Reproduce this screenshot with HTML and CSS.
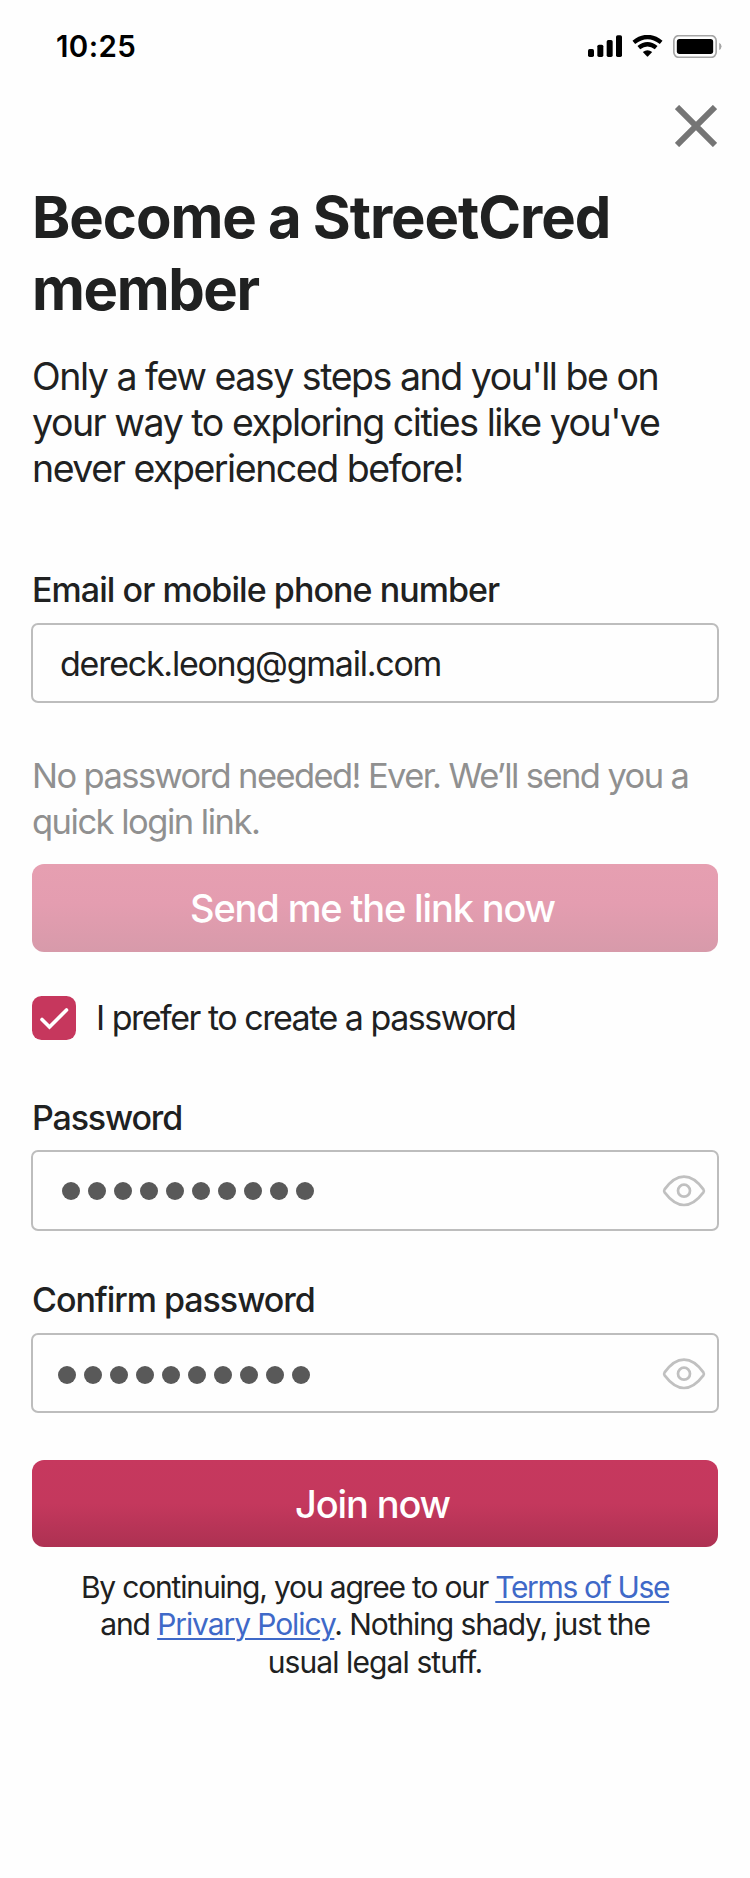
FILE: index.html
```html
<!DOCTYPE html>
<html lang="en">
<head>
<meta charset="utf-8">
<title>Become a StreetCred member</title>
<link rel="stylesheet" href="styles.css">
</head>
<body>
<div class="status">
  <span class="time">10:25</span>
  <div class="status-icons">
    <svg class="signal" viewBox="0 0 102 66"><rect x="0" y="42" width="18" height="24" rx="5"/><rect x="28" y="29" width="18" height="37" rx="5"/><rect x="56" y="15" width="18" height="51" rx="5"/><rect x="84" y="1" width="18" height="65" rx="5"/></svg>
    <svg class="wifi" viewBox="0 0 92 66"><path d="M5 22Q46 -10 87 22M20 38Q46 17 72 38" fill="none" stroke="#000" stroke-width="13" stroke-linecap="butt"/><path d="M32 51Q46 41 60 51L48 64Q46 66 44 64Z"/></svg>
    <svg class="battery" viewBox="0 0 146 69"><rect x="2" y="2" width="127" height="65" rx="15" fill="none" stroke="#a5a5a5" stroke-width="5"/><rect x="11" y="12" width="109" height="45" rx="8"/><path d="M138 23Q145 26 145 34T138 45Z" fill="#a5a5a5"/></svg>
  </div>
</div>
<button class="close" aria-label="Close"><svg viewBox="0 0 42 42"><path d="M2 2 40 40M40 2 2 40" stroke="#757575" stroke-width="6"/></svg></button>
<main class="content">
  <h1 class="title"><span class="line t1">Become a StreetCred</span><span class="line t2">member</span></h1>
  <p class="intro"><span class="line i1">Only a few easy steps and you'll be on</span><span class="line i2">your way to exploring cities like you've</span><span class="line i3">never experienced before!</span></p>
  <div class="label email-label">Email or mobile phone number</div>
  <div class="field"><span class="value">dereck.leong@gmail.com</span></div>
  <p class="hint"><span class="line h1">No password needed! Ever. We’ll send you a</span><span class="line h2">quick login link.</span></p>
  <button class="button send"><span>Send me the link now</span></button>
  <div class="check-row">
    <svg class="checkbox" viewBox="0 0 44 44"><rect width="44" height="44" rx="9.5" fill="#c6375d"/><path d="M10 23.5 17.5 31 34.500 14" fill="none" stroke="#fff" stroke-width="3.6" stroke-linecap="round"/></svg>
    <span class="check-text">I prefer to create a password</span>
  </div>
  <div class="label pass-label">Password</div>
  <div class="field pass">
    <div class="dots"><i></i><i></i><i></i><i></i><i></i><i></i><i></i><i></i><i></i><i></i></div>
    <svg class="eye" viewBox="0 0 42 32"><path d="M1.6 14.4C7 6.800 13.500 1.600 21 1.600S35 6.800 40.400 14.400Q41.400 16 40.400 17.400C35 24.600 28.500 30 21 30S7 24.600 1.600 17.400Q.6 16 1.600 14.400Z"/><circle cx="21" cy="15.700" r="6"/></svg>
  </div>
  <div class="label confirm-label">Confirm password</div>
  <div class="field confirm">
    <div class="dots"><i></i><i></i><i></i><i></i><i></i><i></i><i></i><i></i><i></i><i></i></div>
    <svg class="eye" viewBox="0 0 42 32"><path d="M1.6 14.4C7 6.800 13.500 1.600 21 1.600S35 6.800 40.400 14.400Q41.400 16 40.400 17.400C35 24.600 28.500 30 21 30S7 24.600 1.600 17.400Q.6 16 1.600 14.400Z"/><circle cx="21" cy="15.700" r="6"/></svg>
  </div>
  <button class="button join"><span>Join now</span></button>
  <p class="terms"><span class="line l1">By continuing, you agree to our <a href="#">Terms of Use</a></span><span class="line l2">and <a href="#">Privary Policy</a>. Nothing shady, just the</span><span class="line l3">usual legal stuff.</span></p>
</main>
</body>
</html>
```
FILE: styles.css
```css
* { box-sizing: border-box; margin: 0; padding: 0; }
body {
  width: 750px;
  min-height: 1878px;
  background: #fefefe;
  color: #202121;
  font-family: Inter, "Liberation Sans", sans-serif;
  overflow-x: hidden;
}
button { border: 0; background: none; font: inherit; }
svg { display: block; flex: none; }
.line { display: block; white-space: nowrap; }

.status {
  height: 90px;
  padding: 0 28px 0 56px;
  display: flex;
  justify-content: space-between;
  align-items: center;
}
.time { color: #000; font-size: 29.5px; font-weight: 600; letter-spacing: 0.4px; padding-top: 2px; }
.status-icons { display: flex; align-items: center; gap: 10px; padding-top: 2px; }
.signal { width: 34px; height: 22px; }
.wifi { width: 31px; height: 22px; }
.battery { width: 49px; height: 23px; }

.close { display: block; margin: 15px 33px 0 auto; width: 42px; height: 42px; }
.close svg { width: 42px; height: 42px; }

.content { padding: 0 32px; margin-top: 34px; display: flex; flex-direction: column; }
.title { font-size: 58px; font-weight: 700; line-height: 72px; }
.t1 { letter-spacing: -1.05px; word-spacing: -0.5px; }
.t2 { letter-spacing: -1.4px; }
.intro { margin-top: 29px; font-size: 37.5px; line-height: 46px; letter-spacing: -1.46px; }
.label { font-size: 34px; font-weight: 500; line-height: 40px; letter-spacing: -0.94px; white-space: nowrap; }
.email-label { margin-top: 78px; }
.field {
  height: 80px;
  margin: 13px -1px 0;
  padding: 0 12px 0 27px;
  border: 2px solid #bdbdbd;
  border-radius: 7px;
  display: flex;
  align-items: center;
  justify-content: space-between;
}
.value { font-size: 34px; letter-spacing: -1.24px; }
.hint { margin-top: 50px; font-size: 34.5px; line-height: 46px; letter-spacing: -1.59px; color: #909090; }
.h2 { letter-spacing: -1.5px; }
.button {
  border-radius: 12px;
  color: #fff;
  font-size: 38px;
  font-weight: 500;
  line-height: 86px;
  white-space: nowrap;
  text-align: center;
  letter-spacing: -1.15px;
  padding-right: 5px;
}
.send { margin-top: 19px; height: 88px; background: linear-gradient(#e69fb1 0%, #e49db0 45%, #d79aaa 100%); }
.check-row { margin-top: 44px; display: flex; gap: 20px; height: 44px; }
.checkbox { width: 44px; height: 44px; }
.check-text { font-size: 34px; line-height: 43px; letter-spacing: -1.49px; white-space: nowrap; }
.pass-label { margin-top: 58px; letter-spacing: -1.15px; }
.pass { margin-top: 12px; height: 81px; padding-left: 29px; }
.dots { display: flex; gap: 8px; }
.dots i { width: 18px; height: 18px; border-radius: 50%; background: #595959; }
.eye { width: 42px; height: 32px; margin-top: 1px; fill: none; stroke: #c0c0c0; stroke-width: 2.7; overflow: visible; }
.confirm-label { margin-top: 49px; letter-spacing: -1.04px; }
.confirm { margin-top: 13px; padding-left: 25px; }
.confirm .dots { margin-top: 4px; }
.join { margin-top: 47px; height: 87px; background: linear-gradient(#c6385e 0%, #c4385d 50%, #ad3152 100%); }
.terms { margin-top: 21.5px; font-size: 30px; line-height: 37.5px; text-align: center; }
.l1 { letter-spacing: -1.18px; }
.l2 { letter-spacing: -1.09px; }
.l3 { letter-spacing: -0.9px; }
.l1 a { letter-spacing: -1.35px; }
.terms a { color: #3f69c8; text-decoration: underline; text-decoration-thickness: 2px; text-underline-offset: 3px; }
```
